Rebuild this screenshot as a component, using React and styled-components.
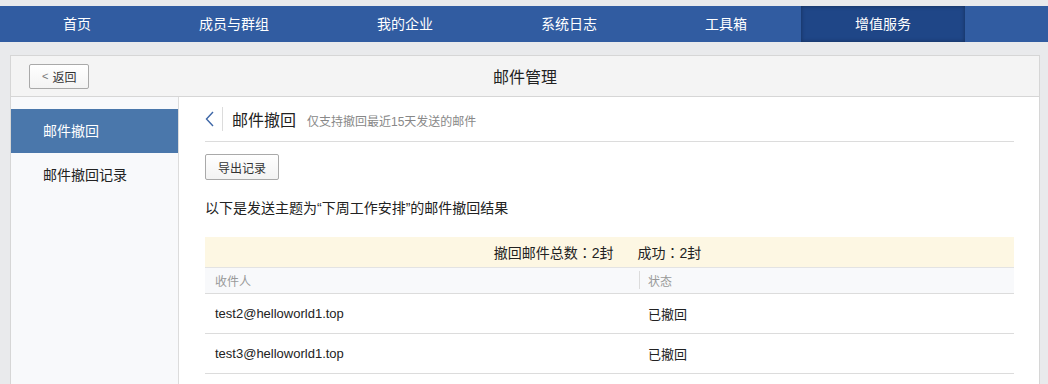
import React from "react";
import styled, { createGlobalStyle } from "styled-components";

const Global = createGlobalStyle`
  html, body { margin: 0; padding: 0; }
  body {
    background: #e9eaec;
    font-family: "Liberation Sans", "Noto Sans CJK SC", sans-serif;
    color: #333;
    overflow: hidden;
  }
`;

const Page = styled.div`
  padding-top: 6px;
  height: 378px;
`;

const Nav = styled.nav`
  display: flex;
  height: 36px;
  background: #315ca1;
  padding-left: 9px;
`;

const NavItem = styled.a`
  display: block;
  padding: 0 54px;
  line-height: 36px;
  font-size: 14px;
  color: #fff;
  background: ${(p) => (p.$active ? "#1f4687" : "transparent")};
  box-shadow: ${(p) => (p.$active ? "inset 0 0 4px rgba(0,0,0,0.35)" : "none")};
  cursor: pointer;
`;

const Panel = styled.div`
  margin: 13px 8px 0 10px;
  border: 1px solid #d6d6d6;
  background: #fff;
  height: 400px;
  display: flex;
  flex-direction: column;
`;

const PanelHeader = styled.div`
  position: relative;
  height: 40px;
  background: #f4f4f4;
  border-bottom: 1px solid #d6d6d6;
  display: flex;
  align-items: center;
  padding-left: 18px;
`;

const PanelTitle = styled.div`
  position: absolute;
  left: 0;
  right: 0;
  text-align: center;
  font-size: 16px;
  color: #222;
  pointer-events: none;
`;

const Button = styled.button`
  height: ${(p) => p.$h || 26}px;
  padding: 0 ${(p) => p.$px || 12}px;
  border: 1px solid #a9a9a9;
  border-radius: 2px;
  background: linear-gradient(#ffffff, #f3f3f3);
  font-family: inherit;
  font-size: 12px;
  color: #333;
  display: inline-flex;
  align-items: center;
  gap: 4px;
  cursor: pointer;
  position: relative;
  z-index: 1;
`;

const Lt = styled.span`
  color: #777;
  font-size: 11px;
`;

const Body = styled.div`
  flex: 1;
  display: flex;
`;

const Sidebar = styled.div`
  width: 167px;
  background: #f8f9fb;
  border-right: 1px solid #dcdcdc;
  padding-top: 12px;
`;

const SideItem = styled.div`
  height: 44px;
  line-height: 44px;
  padding-left: 32px;
  font-size: 14px;
  color: ${(p) => (p.$active ? "#fff" : "#222")};
  background: ${(p) => (p.$active ? "#4a77ab" : "transparent")};
  cursor: pointer;
`;

const Content = styled.div`
  flex: 1;
  padding: 0 25px 0 26px;
`;

const ContentHeader = styled.div`
  height: 44px;
  border-bottom: 1px solid #dcdcdc;
  display: flex;
  align-items: center;
`;

const BackIcon = styled.svg`
  width: 9px;
  height: 16px;
  margin-right: 8px;
  margin-top: -1px;
`;

const VDivider = styled.div`
  width: 1px;
  height: 24px;
  background: #dcdcdc;
  margin-right: 9px;
`;

const Title = styled.span`
  font-size: 16px;
  color: #222;
  margin-right: 11px;
`;

const Sub = styled.span`
  font-size: 12px;
  color: #888;
  margin-top: 2px;
`;

const Toolbar = styled.div`
  margin-top: 12px;
`;

const Intro = styled.div`
  margin-top: 18px;
  line-height: 20px;
  font-size: 14px;
  color: #222;
`;

const Table = styled.div`
  margin-top: 19px;
`;

const Summary = styled.div`
  height: 30px;
  background: #fdf7e3;
  border-bottom: 1px solid #e3e3e3;
  display: flex;
  justify-content: center;
  align-items: center;
  font-size: 14px;
  color: #222;
`;

const SumItem = styled.span`
  margin-right: 24px;
`;

const Colon = styled.span`
  font-family: "Noto Sans CJK JP", sans-serif;
`;

const Row = styled.div`
  display: grid;
  grid-template-columns: 434px 1fr;
  height: ${(p) => (p.$head ? 25 : 39)}px;
  background: ${(p) => (p.$head ? "#f8f9fb" : "#fff")};
  border-bottom: 1px solid #dcdcdc;
  font-size: ${(p) => (p.$head ? 12 : 13)}px;
  color: ${(p) => (p.$head ? "#999" : "#222")};
`;

const Cell = styled.div`
  position: relative;
  display: flex;
  align-items: center;
  padding-left: ${(p) => (p.$second ? 9 : 10)}px;
  ${(p) =>
    p.$divider &&
    `&::before {
      content: "";
      position: absolute;
      left: 0;
      top: 3px;
      bottom: 4px;
      width: 1px;
      background: #dcdcdc;
    }`}
`;

const navItems = ["首页", "成员与群组", "我的企业", "系统日志", "工具箱", "增值服务"];
const rows = [
  ["test2@helloworld1.top", "已撤回"],
  ["test3@helloworld1.top", "已撤回"],
];

export default function App() {
  return (
    <Page>
      <Global />
      <Nav>
        {navItems.map((n) => (
          <NavItem key={n} $active={n === "增值服务"}>{n}</NavItem>
        ))}
      </Nav>
      <Panel>
        <PanelHeader>
          <Button $h={25} $px={12}>
            <Lt>&lt;</Lt>返回
          </Button>
          <PanelTitle>邮件管理</PanelTitle>
        </PanelHeader>
        <Body>
          <Sidebar>
            <SideItem $active>邮件撤回</SideItem>
            <SideItem>邮件撤回记录</SideItem>
          </Sidebar>
          <Content>
            <ContentHeader>
              <BackIcon viewBox="0 0 9 16">
                <polyline points="8,1 1.5,8 8,15" fill="none" stroke="#3d66a6" strokeWidth="1.4" />
              </BackIcon>
              <VDivider />
              <Title>邮件撤回</Title>
              <Sub>仅支持撤回最近15天发送的邮件</Sub>
            </ContentHeader>
            <Toolbar>
              <Button>导出记录</Button>
            </Toolbar>
            <Intro>以下是发送主题为“下周工作安排”的邮件撤回结果</Intro>
            <Table>
              <Summary>
                <SumItem>撤回邮件总数<Colon>：</Colon>2封</SumItem>
                <SumItem>成功<Colon>：</Colon>2封</SumItem>
              </Summary>
              <Row $head>
                <Cell>收件人</Cell>
                <Cell $second $divider>状态</Cell>
              </Row>
              {rows.map(([a, b]) => (
                <Row key={a}>
                  <Cell>{a}</Cell>
                  <Cell $second>{b}</Cell>
                </Row>
              ))}
            </Table>
          </Content>
        </Body>
      </Panel>
    </Page>
  );
}
